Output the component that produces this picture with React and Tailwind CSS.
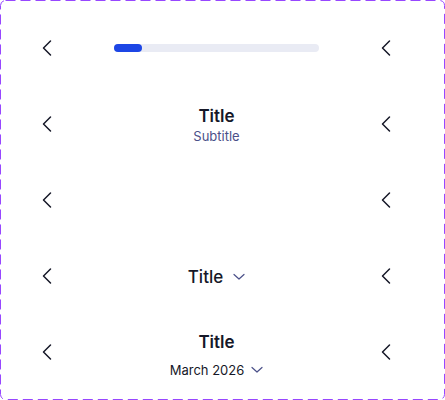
import React from "react";

function ChevronLeft() {
  return (
    <svg width="24" height="24" viewBox="0 0 24 24" fill="none" className="shrink-0">
      <path d="M15.5 5 L8.5 12 L15.5 19" stroke="#161828" strokeWidth="1.5" strokeLinecap="round" strokeLinejoin="round" />
    </svg>
  );
}

function ChevronDown() {
  return (
    <svg width="12" height="8" viewBox="0 0 12 8" fill="none" className="shrink-0">
      <path d="M1 1.5 L6 6 L11 1.5" stroke="#4B5089" strokeWidth="1.2" strokeLinecap="round" strokeLinejoin="round" />
    </svg>
  );
}

function Row({ children }) {
  return (
    <div className="flex h-[76px] items-center pl-[35px] pr-[47px]">
      <ChevronLeft />
      <div className="flex flex-1 flex-col items-center justify-center">{children}</div>
      <ChevronLeft />
    </div>
  );
}

export default function App() {
  return (
    <div className="relative w-[445px] h-[400px] bg-white" style={{ fontFamily: "Inter, 'Noto Sans', sans-serif" }}>
      <svg className="pointer-events-none absolute inset-0" width="445" height="400" viewBox="0 0 445 400" fill="none">
        <rect x="0.5" y="0.5" width="444" height="399" rx="5" stroke="#9747FF" strokeWidth="1" strokeDasharray="10 5" />
      </svg>
      <div className="h-full w-full pt-[10px] pb-[6px]">
        <Row>
          <div className="h-2 w-[205px] rounded-full bg-[#E9EBF4]">
            <div className="h-2 w-[28px] rounded-full bg-[#1D46E5]" />
          </div>
        </Row>
        <Row>
          <div className="mt-[2px] text-[17px] font-semibold leading-[20px] text-[#161828]">Title</div>
          <div className="mt-[2px] text-[13px] leading-[16px] text-[#4B5089]">Subtitle</div>
        </Row>
        <Row>
          <div />
        </Row>
        <Row>
          <div className="mt-[2px] flex items-center gap-[10px]">
            <span className="text-[17px] font-medium leading-[22px] text-[#161828]">Title</span>
            <ChevronDown />
          </div>
        </Row>
        <Row>
          <div className="mt-[6px] text-[17px] font-semibold leading-[20px] text-[#161828]">Title</div>
          <div className="mt-[10px] flex items-center gap-[7px]">
            <span className="text-[13px] leading-[16px] text-[#161828]">March 2026</span>
            <ChevronDown />
          </div>
        </Row>
      </div>
    </div>
  );
}
